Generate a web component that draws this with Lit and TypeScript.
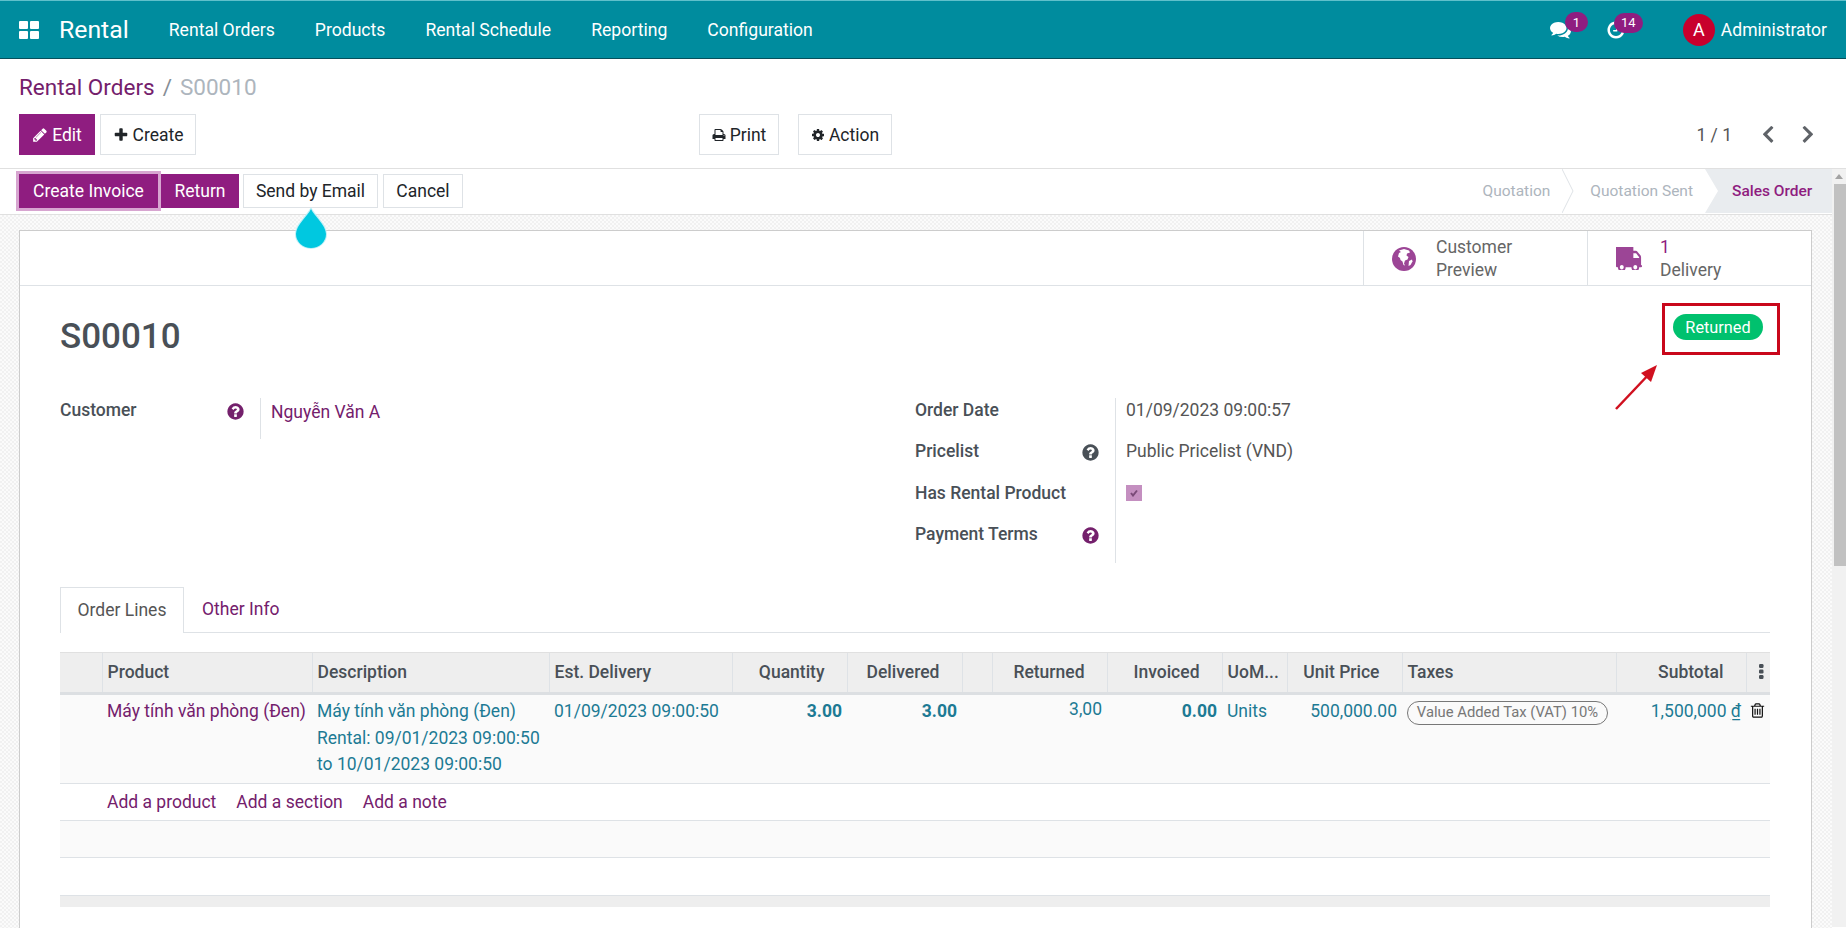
import { LitElement, html, css } from 'lit'
import { customElement } from 'lit/decorators.js'

const I = {
  plus: 'M1600 736v192q0 40-28 68t-68 28h-416v416q0 40-28 68t-68 28h-192q-40 0-68-28t-28-68v-416h-416q-40 0-68-28t-28-68v-192q0-40 28-68t68-28h416v-416q0-40 28-68t68-28h192q40 0 68 28t28 68v416h416q40 0 68 28t28 68z',
  pencil: 'M491 1536l91-91-235-235-91 91v107h128v128h107zm523-928q0-22-22-22-10 0-17 7l-542 542q-7 7-7 17 0 22 22 22 10 0 17-7l542-542q7-7 7-17zm-54-192l416 416-832 832h-416v-416zm683 96q0 53-37 90l-166 166-416-416 166-165q36-38 90-38 53 0 91 38l235 234q37 39 37 91z',
  print: 'M448 1536h896v-256h-896v256zm0-640h896v-384h-160q-40 0-68-28t-28-68v-160h-640v640zm1152 64q0-26-19-45t-45-19-45 19-19 45 19 45 45 19 45-19 19-45zm128 0v416q0 13-9.5 22.5t-22.5 9.5h-224v160q0 40-28 68t-68 28h-960q-40 0-68-28t-28-68v-160h-224q-13 0-22.5-9.5t-9.5-22.5v-416q0-79 56.5-135.5t135.5-56.5h64v-544q0-40 28-68t68-28h672q40 0 88 20t76 48l152 152q28 28 48 76t20 88v256h64q79 0 135.5 56.5t56.5 135.5z',
  cog: 'M1152 896q0-106-75-181t-181-75-181 75-75 181 75 181 181 75 181-75 75-181zm512-109v222q0 12-8 23t-20 13l-185 28q-19 54-39 91 35 50 107 138 10 12 10 25t-9 23q-27 37-99 108t-94 71q-12 0-26-9l-138-108q-44 23-91 38-16 136-29 186-7 28-36 28h-222q-14 0-24.5-8.5t-11.5-21.5l-28-184q-49-16-90-37l-141 107q-10 9-25 9-14 0-25-11-126-114-165-168-7-10-7-23 0-12 8-23 15-21 51-66.5t54-70.5q-27-50-41-99l-183-27q-13-2-21-12.5t-8-23.5v-222q0-12 8-23t19-13l186-28q14-46 39-92-40-57-107-138-10-12-10-24 0-10 9-23 26-36 98.5-107.5t94.5-71.5q13 0 26 10l138 107q44-23 91-38 16-136 29-186 7-28 36-28h222q14 0 24.5 8.5t11.5 21.5l28 184q49 16 90 37l142-107q9-9 24-9 13 0 25 10 129 119 165 170 7 8 7 22 0 12-8 23-15 21-51 66.5t-54 70.5q26 50 41 98l183 28q13 2 21 12.5t8 23.5z',
  help: 'M1024 1376v-192q0-14-9-23t-23-9h-192q-14 0-23 9t-9 23v192q0 14 9 23t23 9h192q14 0 23-9t9-23zm256-672q0-88-55.5-163t-138.5-116-170-41q-243 0-371 213-15 24 8 42l132 100q7 6 19 6 16 0 25-12 53-68 86-92 34-24 86-24 48 0 85.5 26t37.5 59q0 38-20 61t-68 45q-63 28-115.5 86.5t-52.5 125.5v36q0 14 9 23t23 9h192q14 0 23-9t9-23q0-19 21.5-49.5t54.5-49.5q32-18 49-28.5t46-35 44.5-48 28-60.5 12.5-81zm384 192q0 209-103 385.5t-279.5 279.5-385.5 103-385.5-103-279.5-279.5-103-385.5 103-385.5 279.5-279.5 385.5-103 385.5 103 279.5 279.5 103 385.5z',
  truck: 'M640 1408q0-52-38-90t-90-38-90 38-38 90 38 90 90 38 90-38 38-90zm-384-512h384v-256h-158q-13 0-22 9l-195 195q-9 9-9 22v30zm1280 512q0-52-38-90t-90-38-90 38-38 90 38 90 90 38 90-38 38-90zm256-1088v1024q0 15-4 26.5t-13.5 18.5-16.5 11.5-23.5 6-22.5 2-25.5 0-22.5-.5q0 106-75 181t-181 75-181-75-75-181h-384q0 106-75 181t-181 75-181-75-75-181h-64q-3 0-22.5.5t-25.5 0-22.5-2-23.5-6-16.5-11.5-13.5-18.5-4-26.5q0-26 19-45t45-19v-320q0-8-.5-35t0-38 2.5-34.5 6.5-37 14-30.5 22.5-30l198-198q19-19 50.5-32t58.5-13h160v-192q0-26 19-45t45-19h1024q26 0 45 19t19 45z',
  trash: 'M704 736v576q0 14-9 23t-23 9h-64q-14 0-23-9t-9-23v-576q0-14 9-23t23-9h64q14 0 23 9t9 23zm256 0v576q0 14-9 23t-23 9h-64q-14 0-23-9t-9-23v-576q0-14 9-23t23-9h64q14 0 23 9t9 23zm256 0v576q0 14-9 23t-23 9h-64q-14 0-23-9t-9-23v-576q0-14 9-23t23-9h64q14 0 23 9t9 23zm128 724v-948h-896v948q0 22 7 40.5t14.5 27 10.5 8.5h832q3 0 10.5-8.5t14.5-27 7-40.5zm-672-1076h448l-48-117q-7-9-17-11h-317q-10 2-17 11zm928 32v64q0 14-9 23t-23 9h-96v948q0 83-47 143.5t-113 60.5h-832q-66 0-113-58.5t-47-141.5v-952h-96q-14 0-23-9t-9-23v-64q0-14 9-23t23-9h309l70-167q15-37 54-63t79-26h320q40 0 79 26t54 63l70 167h309q14 0 23 9t9 23z',
  comments: 'M1408 768q0 139-94 257t-256.5 186.5-353.5 68.5q-86 0-176-16-124 88-278 128-36 9-86 16h-3q-11 0-20.5-8t-11.5-21q-1-3-1-6.5t.5-6.5 2-6l2.5-5 3.5-5.5 4-5 4.5-5 4-4.5q5-6 23-25t26-29.5 22.5-29 25-38.5 20.5-44q-124-72-195-177t-71-224q0-139 94-257t256.5-186.5 353.5-68.5 353.5 68.5 256.5 186.5 94 257zm384 256q0 120-71 224.5t-195 176.5q10 24 20.5 44t25 38.5 22.5 29 26 29.5 23 25q1 1 4 4.5t4.5 5 4 5 3.5 5.5l2.5 5 2 6 .5 6.5-1 6.5q-3 14-13 22t-22 7q-50-7-86-16-154-40-278-128-90 16-176 16-271 0-472-132 58 4 88 4 161 0 309-45t264-129q125-92 192-212t67-254q0-77-23-152 129 71 204 178t75 230z',
  clock: 'M1024 544v448q0 14-9 23t-23 9h-320q-14 0-23-9t-9-23v-64q0-14 9-23t23-9h224v-352q0-14 9-23t23-9h64q14 0 23 9t9 23zm416 352q0-148-73-273t-198-198-273-73-273 73-198 198-73 273 73 273 198 198 273 73 273-73 198-198 73-273zm224 0q0 209-103 385.5t-279.5 279.5-385.5 103-385.5-103-279.5-279.5-103-385.5 103-385.5 279.5-279.5 385.5-103 385.5 103 279.5 279.5 103 385.5z',
  left: 'M1171 301l-531 531 531 531q19 19 19 45t-19 45l-110 110q-19 19-45 19t-45-19l-686-686q-19-19-19-45t19-45l686-686q19-19 45-19t45 19l110 110q19 19 19 45t-19 45z',
}

const fa = (d: string, cls: string) =>
  html`<svg class="fa ${cls}" viewBox="0 0 1792 1792"><path d=${d}></path></svg>`

const cols = [42, 210, 237, 183, 115, 115, 30, 115, 115, 65, 115, 214, 130, 24]

@customElement('app-root')
export class AppRoot extends LitElement {
  static styles = css`
    :host {
      display: block;
      height: 928px;
      overflow: hidden;
      background: #fff;
      font-family: Roboto, "Noto Sans", sans-serif;
      font-size: 17.5px;
      color: #4c4c4c;
      --purple: #8f1d80;
      --link: #74206c;
      --teal: #1d7a94;
      --line: #dee2e6;
    }
    .fa { fill: currentColor; flex: none; display: block; }

    nav {
      height: 57px;
      background: #008c9e;
      border-top: 1px solid #5fc0cb;
      border-bottom: 1px solid #06505c;
      margin-bottom: -1px;
      display: flex;
      align-items: center;
      color: #fff;
      padding: 0 19px;
    }
    .apps {
      display: grid;
      grid-template-columns: 9px 9px;
      gap: 2px;
      margin-right: 20px;
    }
    .apps i { height: 8px; background: #fff; border-radius: 1px; }
    .brand { font-size: 24.8px; margin-right: 40px; }
    .menu { display: flex; gap: 40px; font-size: 17.6px; }
    .sys { margin-left: auto; display: flex; align-items: center; }
    .notif { position: relative; }
    .count {
      position: absolute;
      top: -7px;
      height: 20px;
      border-radius: 10px;
      background: var(--purple);
      font-size: 13px;
      display: flex;
      align-items: center;
      justify-content: center;
    }
    .chat { width: 20px; margin-right: 36px; }
    .chat .fa { width: 21px; height: 21px; }
    .chat .count { left: 15px; width: 23px; }
    .act { width: 18px; margin-right: 59px; }
    .act .fa { width: 20px; height: 20px; }
    .act .count { left: 8px; width: 29px; }
    .avatar {
      width: 32px;
      height: 32px;
      border-radius: 50%;
      background: #c8002c;
      display: flex;
      align-items: center;
      justify-content: center;
      font-size: 18px;
      margin-right: 6px;
    }

    .panel {
      height: 110px;
      border-bottom: 1px solid #e0e0e0;
      padding: 0 30px 0 19px;
    }
    .crumb {
      font-size: 22.5px;
      line-height: 26px;
      padding-top: 16px;
      margin-bottom: 14px;
      color: #adb5bd;
      display: flex;
    }
    .crumb a { color: var(--link); }
    .crumb span { margin: 0 8px; color: #868e96; }
    .actions { display: flex; align-items: center; }
    .btn {
      box-sizing: border-box;
      display: flex;
      align-items: center;
      justify-content: center;
      gap: 4px;
      height: 41px;
      border: 1px solid var(--line);
      color: #212529;
      background: #fff;
    }
    .btn.primary { background: var(--purple); border-color: var(--purple); color: #fff; }
    .btn .fa { width: 16px; height: 16px; }
    .btn .fa.small { width: 14px; height: 14px; }
    .left-btns { display: flex; gap: 5px; width: 680px; }
    .mid-btns { display: flex; gap: 19px; }
    .pager { margin-left: auto; display: flex; align-items: center; color: #555; }
    .pager .nums { margin-right: 28px; }
    .pager .fa { width: 20px; height: 20px; color: #5f6368; }
    .pager .next { transform: scaleX(-1); margin-left: 16px; }

    .body { display: flex; height: 758px; }
    .main { flex: 1; min-width: 0; position: relative; }
    .scroll { width: 14px; background: #f1f1f1; position: relative; }
    .scroll .up {
      width: 0;
      height: 0;
      margin: 5px auto 0;
      border: 4px solid transparent;
      border-top: 0;
      border-bottom: 5px solid #a3a3a3;
    }
    .scroll .thumb {
      height: 382px;
      margin: 5px 0 0 2px;
      background: #c1c1c1;
    }

    .status {
      height: 44px;
      padding-bottom: 1px;
      border-bottom: 1px solid #e0e0e0;
      display: flex;
      align-items: center;
      padding-left: 19px;
      background: #fff;
    }
    .status .btn { height: 34px; }
    .status .invoice { width: 139px; box-shadow: 0 0 0 3px #d7a5d0; }
    .status .return { width: 78px; margin-left: 3px; }
    .status .email { width: 135px; margin-left: 4px; }
    .status .cancel { width: 80px; margin-left: 5px; }
    .steps {
      margin-left: auto;
      display: flex;
      align-items: center;
      height: 100%;
      color: #adb5bd;
      font-size: 15.5px;
    }
    .steps .chev { width: 12px; height: 44px; margin: 0 16px 0 12px; fill: none; stroke: var(--line); }
    .steps .current {
      height: 100%;
      width: 127px;
      box-sizing: border-box;
      margin-left: 12px;
      padding-left: 27px;
      display: flex;
      align-items: center;
      background: #e9ecef;
      color: var(--purple);
      font-weight: 500;
      clip-path: polygon(0 0, 100% 0, 100% 100%, 0 100%, 13px 50%);
    }

    .bg {
      height: 712px;
      padding: 15px 20px 0 19px;
      background: repeating-conic-gradient(#f1f1f1 0 25%, #fbfbfb 0 50%) 0 0 / 4px 4px;
    }
    .sheet {
      position: relative;
      height: 800px;
      background: #fff;
      border: 1px solid #ccc;
      border-bottom: 0;
    }
    .box {
      height: 54px;
      border-bottom: 1px solid var(--line);
      display: flex;
      justify-content: flex-end;
    }
    .stat {
      box-sizing: border-box;
      width: 224px;
      padding-top: 1px;
      border-left: 1px solid var(--line);
      display: flex;
      align-items: center;
      line-height: 22.5px;
      color: #666;
    }
    .stat b { font-weight: 400; color: var(--purple); display: block; }
    .stat .globe { width: 24px; height: 24px; margin: 0 20px 0 28px; }
    .stat .truck { width: 27px; height: 23px; margin: 0 17px 0 28px; color: #9c4596; transform: scaleX(-1); }

    .form { padding: 26px 0 0 40px; width: 1710px; }
    h1 {
      margin: 0 0 36px;
      font-size: 35px;
      line-height: 50px;
      font-weight: 500;
      color: #495057;
    }
    .groups { display: flex; height: 165px; }
    .group { width: 857px; display: grid; grid-template-columns: 200px 1fr; grid-auto-rows: 41.25px; align-content: start; }
    .label { font-weight: 500; color: #495057; display: flex; justify-content: space-between; line-height: 24px; padding-right: 15px; }
    .label .fa { width: 19px; height: 19px; margin-top: 4px; color: #74206c; }
    .label .fa.dark { color: #495057; }
    .value { border-left: 1px solid var(--line); padding-left: 10px; line-height: 24px; color: #555; }
    .value.link { color: var(--link); padding-top: 2px; }
    .check {
      width: 16px;
      height: 16px;
      margin-top: 4px;
      background: #c48fc0;
      display: flex;
      align-items: center;
      justify-content: center;
    }
    .check svg { width: 8px; height: 8px; fill: none; stroke: #7a4a78; stroke-width: 2; }

    .tabs { margin-top: 24px; display: flex; height: 45px; border-bottom: 1px solid var(--line); }
    .tab { padding: 0 18px 1px; display: flex; align-items: center; color: var(--link); white-space: nowrap; }
    .tab.on {
      box-sizing: border-box;
      width: 124px;
      height: 46px;
      padding: 0 0 2px;
      justify-content: center;
      background: #fff;
      border: 1px solid var(--line);
      border-bottom: 0;
      color: #555;
    }

    table { margin-top: 19px; width: 1710px; table-layout: fixed; border-collapse: collapse; }
    th {
      height: 41px;
      padding: 0 5px 2px;
      box-sizing: border-box;
      background: #eee;
      border-left: 1px solid var(--line);
      border-top: 1px solid #e0e0e0;
      border-bottom: 3px solid #dcdfe2;
      font-weight: 500;
      color: #495057;
      text-align: left;
      white-space: nowrap;
      overflow: hidden;
    }
    th:first-child { border-left: 0; }
    th.num { text-align: right; padding-right: 22px; }
    th.more { padding: 0 0 2px 7px; color: #495057; }
    th.more svg { width: 7px; height: 17px; margin: 0 auto; }
    td {
      padding: 3px 5px 0;
      vertical-align: top;
      line-height: 26.5px;
      color: var(--teal);
      white-space: nowrap;
      overflow: hidden;
    }
    tr.line td { height: 90px; box-sizing: border-box; background: #fafafa; border-bottom: 1px solid var(--line); }
    td.prod { color: var(--link); }
    td.num { text-align: right; }
    td.strong { font-weight: 700; }
    td.plain { padding-top: 1px; }
    td.bin { padding: 7px 0 0 3px; color: #111; }
    td.bin svg { width: 17px; height: 17px; }
    u { text-underline-offset: 2px; }
    .pill {
      display: inline-block;
      box-sizing: border-box;
      width: 201px;
      height: 24px;
      margin: 3px 0 0 0;
      line-height: 21px;
      text-align: center;
      border: 1px solid #777;
      border-radius: 12px;
      color: #777;
      font-size: 14.8px;
    }
    tr.add td {
      height: 37px;
      box-sizing: border-box;
      padding-top: 5px;
      border-bottom: 1px solid var(--line);
      color: var(--link);
    }
    .adds { display: flex; gap: 20px; padding-left: 42px; }
    tr.empty td { padding: 0; height: 37px; box-sizing: border-box; border-bottom: 1px solid var(--line); }
    tr.empty.shade td { background: #fafafa; }
    tr.empty.tall td { height: 38px; }
    tr.foot td { padding: 0; height: 11px; background: #eee; }

    .badge {
      position: absolute;
      top: 83px;
      right: 48px;
      width: 90px;
      height: 26px;
      border-radius: 13px;
      background: #00c16e;
      color: #fff;
      font-size: 16.3px;
      display: flex;
      align-items: center;
      justify-content: center;
    }
    .mark {
      position: absolute;
      top: 72px;
      right: 31px;
      width: 118px;
      height: 52px;
      box-sizing: border-box;
      border: 3px solid #c9071b;
    }
    .arrow { position: absolute; top: 131px; left: 1590px; width: 48px; height: 50px; }
    .drop { position: absolute; top: 38px; left: 295px; width: 32px; height: 42px; }
  `

  render() {
    return html`
      <nav>
        <div class="apps"><i></i><i></i><i></i><i></i></div>
        <div class="brand">Rental</div>
        <div class="menu">
          <span>Rental Orders</span><span>Products</span><span>Rental Schedule</span><span>Reporting</span><span>Configuration</span>
        </div>
        <div class="sys">
          <div class="notif chat">${fa(I.comments, '')}<span class="count">1</span></div>
          <div class="notif act">${fa(I.clock, '')}<span class="count">14</span></div>
          <div class="avatar">A</div>
          <div>Administrator</div>
        </div>
      </nav>

      <div class="panel">
        <div class="crumb"><a>Rental Orders</a><span>/</span>S00010</div>
        <div class="actions">
          <div class="left-btns">
            <div class="btn primary" style="width:76px">${fa(I.pencil, '')}Edit</div>
            <div class="btn" style="width:96px">${fa(I.plus, '')}Create</div>
          </div>
          <div class="mid-btns">
            <div class="btn" style="width:80px">${fa(I.print, 'small')}Print</div>
            <div class="btn" style="width:94px">${fa(I.cog, 'small')}Action</div>
          </div>
          <div class="pager">
            <span class="nums">1 / 1</span>
            ${fa(I.left, '')}${fa(I.left, 'next')}
          </div>
        </div>
      </div>

      <div class="body">
        <div class="main">
          <div class="status">
            <div class="btn primary invoice">Create Invoice</div>
            <div class="btn primary return">Return</div>
            <div class="btn email">Send by Email</div>
            <div class="btn cancel">Cancel</div>
            <div class="steps">
              <span>Quotation</span>
              <svg class="chev" viewBox="0 0 12 44"><polyline points="0,0 11,22 0,44"></polyline></svg>
              <span>Quotation Sent</span>
              <div class="current">Sales Order</div>
            </div>
          </div>

          <div class="bg">
            <div class="sheet">
              <div class="box">
                <div class="stat">
                  <svg class="fa globe" viewBox="0 0 24 24">
                    <circle cx="12" cy="12" r="12" fill="#9c4596"></circle>
                    <path fill="#fff" d="M7 3.5 12 2l5 1.5 1 2-3 1-.5 2 2 1.5-1 2.500-2.500 1-1 3 1 2-1.500-.5-1-3.500-2-1.500-.5-2-2-1.500 1-3.500 2-1z"></path>
                    <path fill="#fff" d="M17 14l3-1.500.5 2-2 3.500-2 1z"></path>
                  </svg>
                  <div>Customer<br />Preview</div>
                </div>
                <div class="stat">
                  <svg class="fa truck" viewBox="0 300 1792 1260" preserveAspectRatio="none"><path d=${I.truck}></path></svg>
                  <div><b>1</b>Delivery</div>
                </div>
              </div>

              <div class="form">
                <h1>S00010</h1>
                <div class="groups">
                  <div class="group">
                    <div class="label">Customer ${fa(I.help, '')}</div>
                    <div class="value link">Nguyễn Văn A</div>
                  </div>
                  <div class="group">
                    <div class="label">Order Date</div>
                    <div class="value">01/09/2023 09:00:57</div>
                    <div class="label">Pricelist ${fa(I.help, 'dark')}</div>
                    <div class="value">Public Pricelist (VND)</div>
                    <div class="label">Has Rental Product</div>
                    <div class="value">
                      <div class="check"><svg viewBox="0 0 8 8"><polyline points="1,4 3,6.500 7,1.500"></polyline></svg></div>
                    </div>
                    <div class="label">Payment Terms ${fa(I.help, '')}</div>
                    <div class="value"></div>
                  </div>
                </div>

                <div class="tabs">
                  <div class="tab on">Order Lines</div>
                  <div class="tab">Other Info</div>
                </div>

                <table>
                  <colgroup>${cols.map((w) => html`<col style="width:${w}px" />`)}</colgroup>
                  <thead>
                    <tr>
                      <th></th>
                      <th>Product</th>
                      <th>Description</th>
                      <th>Est. Delivery</th>
                      <th class="num">Quantity</th>
                      <th class="num">Delivered</th>
                      <th></th>
                      <th class="num">Returned</th>
                      <th class="num">Invoiced</th>
                      <th>UoM...</th>
                      <th class="num">Unit Price</th>
                      <th>Taxes</th>
                      <th class="num">Subtotal</th>
                      <th class="more">
                        <svg class="fa" viewBox="0 0 7 17"><rect x="1" y="1" width="4.500" height="4" rx="1.200"></rect><rect x="1" y="6.500" width="4.500" height="4" rx="1.200"></rect><rect x="1" y="12" width="4.500" height="4" rx="1.200"></rect></svg>
                      </th>
                    </tr>
                  </thead>
                  <tbody>
                    <tr class="line">
                      <td></td>
                      <td class="prod">Máy tính văn phòng (Đen)</td>
                      <td>Máy tính văn phòng (Đen)<br />Rental: 09/01/2023 09:00:50<br />to 10/01/2023 09:00:50</td>
                      <td>01/09/2023 09:00:50</td>
                      <td class="num strong">3.00</td>
                      <td class="num strong">3.00</td>
                      <td></td>
                      <td class="num plain">3,00</td>
                      <td class="num strong">0.00</td>
                      <td>Units</td>
                      <td class="num">500,000.00</td>
                      <td><span class="pill">Value Added Tax (VAT) 10%</span></td>
                      <td class="num">1,500,000 <u>₫</u></td>
                      <td class="bin">${fa(I.trash, '')}</td>
                    </tr>
                    <tr class="add">
                      <td colspan="14"><div class="adds"><span>Add a product</span><span>Add a section</span><span>Add a note</span></div></td>
                    </tr>
                    <tr class="empty shade"><td colspan="14"></td></tr>
                    <tr class="empty tall"><td colspan="14"></td></tr>
                    <tr class="foot"><td colspan="14"></td></tr>
                  </tbody>
                </table>
              </div>

              <div class="badge">Returned</div>
              <div class="mark"></div>
              <svg class="arrow" viewBox="0 0 48 50">
                <line x1="6" y1="47" x2="42" y2="9" stroke="#d0101f" stroke-width="2.500"></line>
                <polygon points="47,3 31,11 41,20" fill="#d0101f"></polygon>
              </svg>
            </div>
          </div>

          <svg class="drop" viewBox="0 0 32 42">
            <path fill="#bff0f7" d="M16 0C13 7 0 17 0 27a16 15 0 0 0 32 0C32 17 19 7 16 0z"></path>
            <path fill="#00c8e0" d="M16 2C13 9 1 18 1 27a15 14 0 0 0 30 0C31 18 19 9 16 2z"></path>
          </svg>
        </div>
        <div class="scroll">
          <div class="up"></div>
          <div class="thumb"></div>
        </div>
      </div>
    `
  }
}

declare global {
  interface HTMLElementTagNameMap {
    'app-root': AppRoot,
  }
}
